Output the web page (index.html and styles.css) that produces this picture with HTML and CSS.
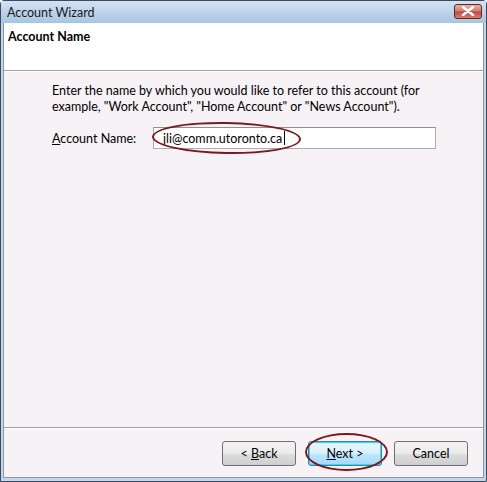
FILE: index.html
```html
<!DOCTYPE html>
<html lang="en">
<head>
  <meta charset="UTF-8" />
  <title>Account Wizard</title>
  <link rel="stylesheet" href="styles.css">
</head>
<body>
  <div class="window">
    <div class="titlebar">
      <span class="title">Account Wizard</span>
      <span class="close">
        <svg width="14" height="10" viewBox="0 0 14 10">
          <path d="M2 1 L12 9 M12 1 L2 9" stroke="#fff" stroke-width="2.6" stroke-linecap="round" />
        </svg>
      </span>
    </div>
    <div class="frame">
      <div class="header">
        <h1>Account Name</h1>
      </div>
      <div class="main">
        <p>Enter the name by which you would like to refer to this account (for<br>example, "Work Account", "Home Account" or "News Account").</p>
        <div class="row">
          <label for="acct"><u>A</u>ccount Name:</label>
          <div class="field">
            <input id="acct" type="text" value="jli@comm.utoronto.ca" />
            <span class="caret"></span>
            <span class="mark mark-field"></span>
          </div>
        </div>
      </div>
      <div class="footer">
        <button class="btn">&lt; <u>B</u>ack</button>
        <div class="next-wrap">
          <button class="btn default"><u>N</u>ext &gt;</button>
          <span class="mark mark-next"></span>
        </div>
        <button class="btn">Cancel</button>
      </div>
    </div>
  </div>
</body>
</html>
```

FILE: styles.css
```css
body {
  margin: 0;
  font-family: "Lato", "Noto Sans", sans-serif;
  font-size: 12.5px;
  color: #000;
  background: #fff;
}
.window {
  width: 487px;
  height: 482px;
  box-sizing: border-box;
  border: 1px solid #3d4a5a;
  border-radius: 4px 4px 0 0;
  background: #c2d7ee;
  display: flex;
  flex-direction: column;
}
.titlebar {
  height: 22px;
  display: flex;
  align-items: center;
  justify-content: space-between;
  padding: 0 4px 0 6px;
  background: linear-gradient(#d3e3f5, #b9d0ea 60%, #a9c4e3);
}
.title {
  color: #1a1a1a;
}
.close {
  width: 28px;
  height: 15px;
  box-sizing: border-box;
  border: 1px solid #5b2b26;
  border-radius: 3px;
  background: linear-gradient(#e9b0a6, #d47c6f 45%, #c04a3c 55%, #d6826f);
  display: flex;
  align-items: center;
  justify-content: center;
  margin-top: -2px;
}
.frame {
  flex: 1;
  margin: 0 2px 3px 2px;
  display: flex;
  flex-direction: column;
  background: #f7f2f5;
  border: 1px solid #8a96a6;
  border-top: none;
}
.header {
  height: 48px;
  background: #fff;
  border-bottom: 1px solid #a0a0a0;
  box-shadow: 0 1px 0 #fff;
  padding: 6px 0 0 4px;
  box-sizing: border-box;
}
.header h1 {
  margin: 0;
  font-size: 12.5px;
  font-weight: bold;
}
.main {
  flex: 1;
  padding: 12px 0 0 48px;
}
.main p {
  margin: 0;
  line-height: 16px;
  white-space: nowrap;
}
.row {
  display: flex;
  align-items: center;
  margin-top: 12px;
}
.row label {
  width: 101px;
}
.field {
  position: relative;
}
.field input {
  display: block;
  width: 283px;
  height: 22px;
  box-sizing: border-box;
  border: 1px solid #abadb3;
  border-top-color: #8e8f8f;
  background: #fff;
  font: inherit;
  padding: 0 0 0 9px;
  margin: 0;
}
.caret {
  position: absolute;
  left: 131px;
  top: 4px;
  width: 1px;
  height: 14px;
  background: #000;
}
.mark {
  position: absolute;
  border: 2px solid #7a1a1e;
  border-radius: 50%;
  pointer-events: none;
}
.mark-field {
  left: -1px;
  top: -5px;
  width: 145px;
  height: 28px;
  transform: rotate(1deg);
}
.footer {
  height: 50px;
  border-top: 1px solid #a0a0a0;
  box-shadow: inset 0 1px 0 #fff;
  display: flex;
  justify-content: flex-end;
  gap: 12px;
  padding: 13px 15px 0 0;
  box-sizing: border-box;
}
.next-wrap {
  position: relative;
}
.btn {
  width: 74px;
  height: 25px;
  box-sizing: border-box;
  border: 1px solid #707070;
  border-radius: 3px;
  background: linear-gradient(#f2f2f2, #ebebeb 50%, #dddddd 51%, #cfcfcf);
  font: inherit;
  color: #000;
  padding: 0;
}
.btn.default {
  border-color: #3c7fb1;
  box-shadow: inset 0 0 0 1px #48d0f2;
  background: linear-gradient(#eaf6fd, #d9f0fc 50%, #bee6fd 51%, #a7d9f5);
}
.mark-next {
  left: -3px;
  top: -8px;
  width: 79px;
  height: 34px;
}
```
